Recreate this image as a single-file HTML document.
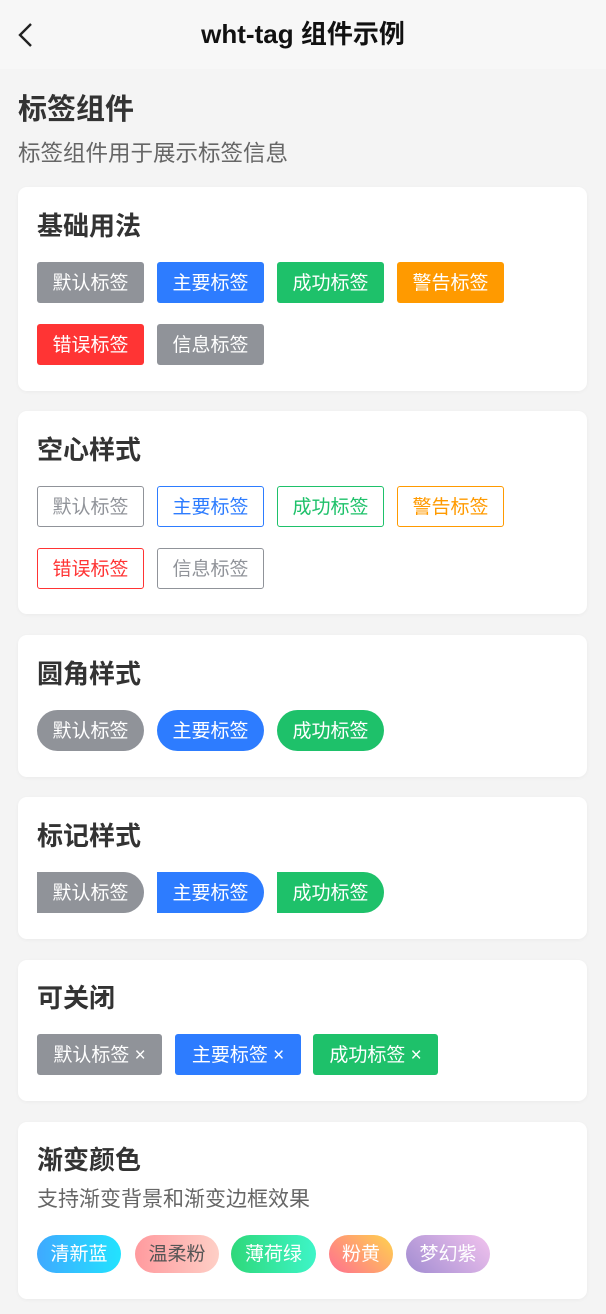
<!DOCTYPE html>
<html><head><meta charset="utf-8"><style>
*{margin:0;padding:0;box-sizing:border-box}
body{width:606px;height:1314px;background:#f4f4f4;font-family:"Liberation Sans","Noto Sans CJK SC",sans-serif;position:relative;overflow:hidden}
.hdr{position:absolute;left:0;top:0;width:606px;height:69px;background:#f7f7f7}
.hdr h1{position:absolute;left:0;right:0;top:17px;text-align:center;font-size:26px;font-weight:bold;color:#111;line-height:34px}
.hdr svg{position:absolute;left:16px;top:21px}
.pt{position:absolute;left:18px;top:91px;font-size:29px;font-weight:bold;color:#333;line-height:38px}
.ps{position:absolute;left:18px;top:139px;font-size:22.5px;color:#666;line-height:30px}
.card{position:absolute;left:18px;width:569px;background:#fff;border-radius:9px;box-shadow:0 1px 4px rgba(0,0,0,.04)}
.ct{position:absolute;left:19px;font-size:26px;font-weight:bold;color:#333;line-height:34px}
.tag{position:absolute;height:41px;line-height:43px;text-align:center;color:#fff;font-size:19px;border-radius:3px;width:107px}
.o{background:#fff;border:1px solid;line-height:41px}
.g{background:#909399}.b{background:#2d7cff}.s{background:#1ec16a}.w{background:#ff9a00}.e{background:#ff3434}
.r{border-radius:21px}.m{border-radius:0 21px 21px 0}
.gr{position:absolute;height:38px;line-height:39px;border-radius:19px;color:#fff;font-size:19px;text-align:center;top:113px}
</style></head><body>
<div class="hdr"><svg width="20" height="28" viewBox="0 0 20 28"><path d="M15 3 L4 14 L15 25" fill="none" stroke="#222" stroke-width="2.4"/></svg><h1>wht-tag 组件示例</h1></div>
<div class="pt">标签组件</div>
<div class="ps">标签组件用于展示标签信息</div>

<div class="card" style="top:187px;height:204px">
<div class="ct" style="top:22px">基础用法</div>
<div class="tag g" style="left:19px;top:75px">默认标签</div>
<div class="tag b" style="left:139px;top:75px">主要标签</div>
<div class="tag s" style="left:259px;top:75px">成功标签</div>
<div class="tag w" style="left:379px;top:75px">警告标签</div>
<div class="tag e" style="left:19px;top:137px">错误标签</div>
<div class="tag g" style="left:139px;top:137px">信息标签</div>
</div>

<div class="card" style="top:411px;height:203px">
<div class="ct" style="top:22px">空心样式</div>
<div class="tag o" style="left:19px;top:75px;color:#909399;border-color:#909399">默认标签</div>
<div class="tag o" style="left:139px;top:75px;color:#2d7cff;border-color:#2d7cff">主要标签</div>
<div class="tag o" style="left:259px;top:75px;color:#1ec16a;border-color:#1ec16a">成功标签</div>
<div class="tag o" style="left:379px;top:75px;color:#ff9a00;border-color:#ff9a00">警告标签</div>
<div class="tag o" style="left:19px;top:137px;color:#ff3434;border-color:#ff3434">错误标签</div>
<div class="tag o" style="left:139px;top:137px;color:#909399;border-color:#909399">信息标签</div>
</div>

<div class="card" style="top:635px;height:142px">
<div class="ct" style="top:22px">圆角样式</div>
<div class="tag g r" style="left:19px;top:75px">默认标签</div>
<div class="tag b r" style="left:139px;top:75px">主要标签</div>
<div class="tag s r" style="left:259px;top:75px">成功标签</div>
</div>

<div class="card" style="top:797px;height:142px">
<div class="ct" style="top:22px">标记样式</div>
<div class="tag g m" style="left:19px;top:75px">默认标签</div>
<div class="tag b m" style="left:139px;top:75px">主要标签</div>
<div class="tag s m" style="left:259px;top:75px">成功标签</div>
</div>

<div class="card" style="top:960px;height:141px">
<div class="ct" style="top:21px">可关闭</div>
<div class="tag g" style="left:19px;top:74px;width:125px">默认标签 ×</div>
<div class="tag b" style="left:157px;top:74px;width:126px">主要标签 ×</div>
<div class="tag s" style="left:295px;top:74px;width:125px">成功标签 ×</div>
</div>

<div class="card" style="top:1122px;height:177px">
<div class="ct" style="top:21px">渐变颜色</div>
<div style="position:absolute;left:19px;top:64px;font-size:21px;color:#666;line-height:28px">支持渐变背景和渐变边框效果</div>
<div class="gr" style="left:19px;width:84px;background:linear-gradient(90deg,#3fa9ff,#22e3ff)">清新蓝</div>
<div class="gr" style="left:117px;width:84px;background:linear-gradient(90deg,#ff9a9e,#fecfc6);color:#555">温柔粉</div>
<div class="gr" style="left:213px;width:85px;background:linear-gradient(90deg,#2ed87a,#3ef5c8)">薄荷绿</div>
<div class="gr" style="left:311px;width:64px;background:linear-gradient(45deg,#ff6f91,#ffd34e)">粉黄</div>
<div class="gr" style="left:388px;width:84px;background:linear-gradient(45deg,#a18cd1,#f2c3ee)">梦幻紫</div>
</div>
</body></html>
